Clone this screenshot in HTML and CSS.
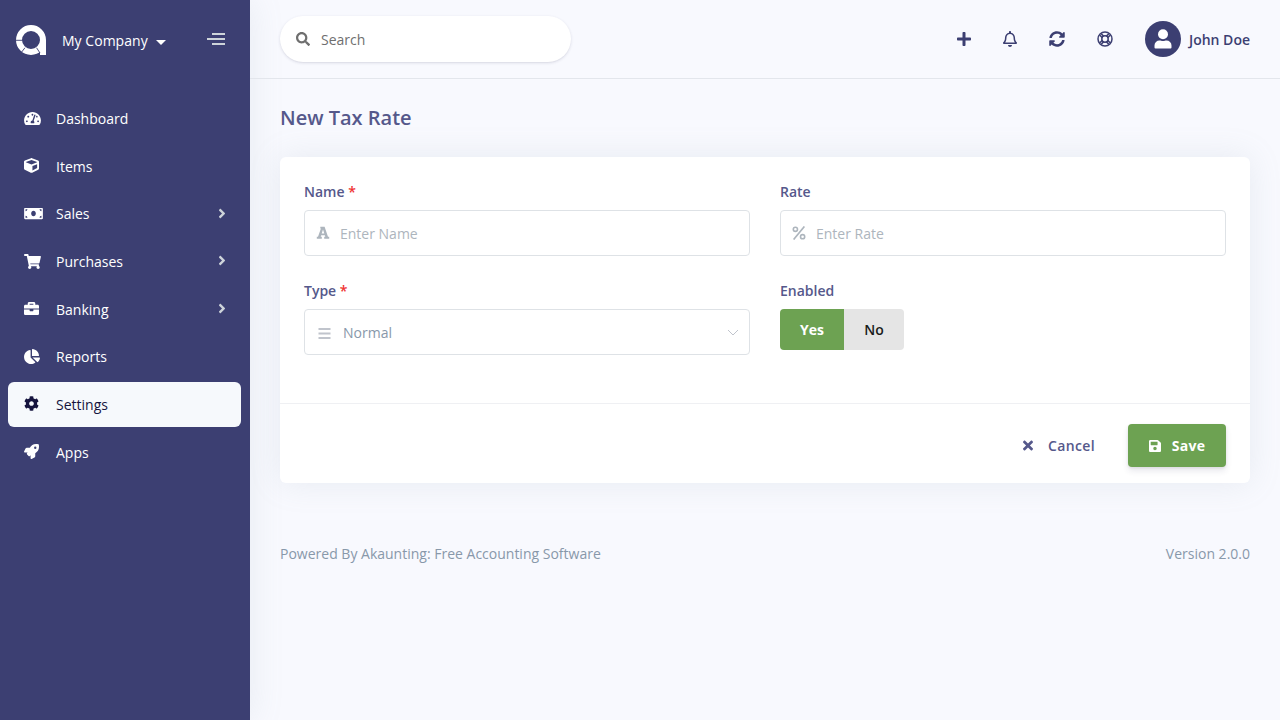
FILE: index.html
```html
<!DOCTYPE html>
<html lang="en">
<head>
<meta charset="utf-8">
<title>New Tax Rate</title>
<link rel="stylesheet" href="styles.css">
</head>
<body>
<aside class="sidebar">
  <div class="brand">
    <svg class="logo" viewBox="0 0 30 30"><circle cx="15" cy="15" r="12" fill="none" stroke="#fff" stroke-width="6"/><path d="M24 15h6v15h-6z" fill="#fff"/><path d="M0 15.3h6.500M9 22.700l-3.400 4.400M20.500 22.700l3.500 5.300" stroke="#3c3f72" stroke-width=".9"/></svg>
    <span class="company">My Company</span>
    <span class="caret"></span>
    <span class="burger"><i></i><i></i><i></i></span>
  </div>
  <nav class="menu">
    <a class="item"><svg class="w17" viewBox="0 0 576 512"><path d="M288 32C128.94 32 0 160.94 0 320c0 52.8 14.25 102.26 39.06 144.8 5.61 9.62 16.3 15.2 27.44 15.2h443c11.14 0 21.83-5.58 27.44-15.2C561.75 422.26 576 372.8 576 320c0-159.06-128.94-288-288-288zm0 64c14.71 0 26.58 10.13 30.32 23.65-1.11 2.26-2.64 4.23-3.45 6.67l-9.22 27.67c-5.13 3.49-10.97 6.01-17.64 6.01-17.67 0-32-14.33-32-32S270.33 96 288 96zM96 384c-17.67 0-32-14.33-32-32s14.33-32 32-32 32 14.33 32 32-14.33 32-32 32zm48-160c-17.67 0-32-14.33-32-32s14.33-32 32-32 32 14.33 32 32-14.33 32-32 32zm246.77-72.41l-61.33 184C343.13 347.33 352 364.54 352 384c0 11.72-3.38 22.55-8.88 32H232.88c-5.5-9.45-8.88-20.28-8.88-32 0-33.94 26.5-61.43 59.9-63.59l61.34-184.01c4.17-12.56 17.73-19.45 30.36-15.17 12.57 4.19 19.35 17.79 15.17 30.36zm14.66 57.2l15.52-46.55c3.47-1.29 7.13-2.23 11.05-2.23 17.67 0 32 14.33 32 32s-14.33 32-32 32c-11.38-.01-20.89-6.28-26.57-15.22zM480 384c-17.67 0-32-14.33-32-32s14.33-32 32-32 32 14.33 32 32-14.33 32-32 32z"/></svg><span>Dashboard</span></a>
    <a class="item"><svg viewBox="0 0 512 512"><path d="M239.1 6.3l-208 78c-18.7 7-31.1 25-31.1 45v225.1c0 18.2 10.3 34.8 26.5 42.9l208 104c13.5 6.8 29.4 6.8 42.9 0l208-104c16.3-8.1 26.5-24.8 26.5-42.9V129.3c0-20-12.4-37.9-31.1-44.9l-208-78C262 2.2 250 2.2 239.1 6.3zM256 68.4l192 72v1.1l-192 78-192-78v-1.1l192-72zm32 356V275.5l160-65v133.9l-160 80z"/></svg><span>Items</span></a>
    <a class="item"><svg class="w19" viewBox="0 0 640 512"><path d="M608 64H32C14.33 64 0 78.33 0 96v320c0 17.67 14.33 32 32 32h576c17.67 0 32-14.33 32-32V96c0-17.67-14.33-32-32-32zM48 400v-64c35.35 0 64 28.65 64 64H48zm0-224v-64h64c0 35.35-28.65 64-64 64zm272 176c-44.19 0-80-42.99-80-96 0-53.02 35.82-96 80-96s80 42.98 80 96c0 53.03-35.83 96-80 96zm272 48h-64c0-35.35 28.65-64 64-64v64zm0-224c-35.35 0-64-28.65-64-64h64v64z"/></svg><span>Sales</span><svg class="arrow" viewBox="0 0 256 512"><path d="M224.3 273l-136 136c-9.4 9.4-24.6 9.4-33.9 0l-22.6-22.6c-9.4-9.4-9.4-24.6 0-33.9l96.4-96.4-96.4-96.4c-9.4-9.4-9.4-24.6 0-33.9L54.3 103c9.4-9.4 24.6-9.4 33.9 0l136 136c9.5 9.4 9.5 24.6.1 34z"/></svg></a>
    <a class="item"><svg class="w17" viewBox="0 0 576 512"><path d="M528.12 301.319l47.273-208C578.806 78.301 567.391 64 551.99 64H159.208l-9.166-44.81C147.758 8.021 137.93 0 126.529 0H24C10.745 0 0 10.745 0 24v16c0 13.255 10.745 24 24 24h69.883l70.248 343.435C147.325 417.1 136 435.222 136 456c0 30.928 25.072 56 56 56s56-25.072 56-56c0-15.674-6.447-29.835-16.824-40h209.647C430.447 426.165 424 440.326 424 456c0 30.928 25.072 56 56 56s56-25.072 56-56c0-22.172-12.888-41.332-31.579-50.405l5.517-24.276c3.413-15.018-8.002-29.319-23.403-29.319H218.117l-6.545-32h293.145c11.206 0 20.92-7.754 23.403-18.681z"/></svg><span>Purchases</span><svg class="arrow" viewBox="0 0 256 512"><path d="M224.3 273l-136 136c-9.4 9.4-24.6 9.4-33.9 0l-22.6-22.6c-9.4-9.4-9.4-24.6 0-33.9l96.4-96.4-96.4-96.4c-9.4-9.4-9.4-24.6 0-33.9L54.3 103c9.4-9.4 24.6-9.4 33.9 0l136 136c9.5 9.4 9.5 24.6.1 34z"/></svg></a>
    <a class="item"><svg viewBox="0 0 512 512"><path d="M320 336c0 8.84-7.16 16-16 16h-96c-8.84 0-16-7.16-16-16v-48H0v144c0 25.6 22.4 48 48 48h416c25.6 0 48-22.4 48-48V288H320v48zm144-208h-80V80c0-25.6-22.4-48-48-48H176c-25.6 0-48 22.4-48 48v48H48c-25.6 0-48 22.4-48 48v80h512v-80c0-25.6-22.4-48-48-48zm-144 0H192V96h128v32z"/></svg><span>Banking</span><svg class="arrow" viewBox="0 0 256 512"><path d="M224.3 273l-136 136c-9.4 9.4-24.6 9.4-33.9 0l-22.6-22.6c-9.4-9.4-9.4-24.6 0-33.9l96.4-96.4-96.4-96.4c-9.4-9.4-9.4-24.6 0-33.9L54.3 103c9.4-9.4 24.6-9.4 33.9 0l136 136c9.5 9.4 9.5 24.6.1 34z"/></svg></a>
    <a class="item"><svg class="w16" viewBox="0 0 544 512"><path d="M527.79 288H290.5l158.03 158.03c6.04 6.04 15.98 6.53 22.19.68 38.7-36.46 65.32-85.61 73.13-140.86 1.34-9.46-6.51-17.85-16.06-17.85zm-15.83-64.8C503.72 103.74 408.26 8.28 288.8.04 279.68-.59 272 7.1 272 16.24V240h223.77c9.14 0 16.82-7.68 16.19-16.8zM224 288V50.71c0-9.55-8.39-17.4-17.84-16.06C86.99 51.49-4.1 155.6.14 280.37 4.5 408.51 114.83 513.59 243.03 511.98c50.4-.63 96.97-16.87 135.26-44.03 7.9-5.6 8.42-17.23 1.57-24.08L224 288z"/></svg><span>Reports</span></a>
    <a class="item active"><svg viewBox="0 0 512 512"><path d="M487.4 315.7l-42.6-24.6c4.3-23.2 4.3-47 0-70.2l42.6-24.6c4.9-2.8 7.1-8.6 5.5-14-11.1-35.6-30-67.8-54.7-94.6-3.8-4.1-10-5.1-14.8-2.3L380.8 110c-17.9-15.4-38.5-27.3-60.8-35.1V25.8c0-5.6-3.9-10.5-9.4-11.7-36.7-8.2-74.3-7.8-109.2 0-5.5 1.2-9.4 6.1-9.4 11.7V75c-22.2 7.9-42.8 19.8-60.8 35.1L88.7 85.5c-4.9-2.8-11-1.9-14.8 2.3-24.7 26.7-43.6 58.9-54.7 94.6-1.7 5.4.6 11.2 5.5 14L67.3 221c-4.3 23.2-4.3 47 0 70.2l-42.6 24.6c-4.9 2.8-7.1 8.6-5.5 14 11.1 35.6 30 67.8 54.7 94.6 3.8 4.1 10 5.1 14.8 2.3l42.6-24.6c17.9 15.4 38.5 27.3 60.8 35.1v49.2c0 5.6 3.9 10.5 9.4 11.7 36.7 8.2 74.3 7.8 109.2 0 5.5-1.2 9.4-6.1 9.4-11.7v-49.2c22.2-7.9 42.8-19.8 60.8-35.1l42.6 24.6c4.9 2.8 11 1.9 14.8-2.3 24.7-26.7 43.6-58.9 54.7-94.6 1.5-5.500-.7-11.300-5.600-14.100zM256 336c-44.100 0-80-35.900-80-80s35.900-80 80-80 80 35.900 80 80-35.900 80-80 80z"/></svg><span>Settings</span></a>
    <a class="item"><svg viewBox="0 0 512 512"><path d="M505.12 19.09c-1.19-5.53-6.66-11-12.21-12.19C460.72 0 435.51 0 410.41 0 307.18 0 245.27 55.2 199.05 128H94.84c-16.35 0-35.56 11.88-42.89 26.48L2.52 253.3A28.4 28.4 0 0 0 0 264a24 24 0 0 0 24 24h103.8l-22.47 22.47c-11.36 11.36-13 32.26 0 45.25l50.9 50.9c11.16 11.2 32.16 13.16 45.28 0L224 384.16V488a24 24 0 0 0 24 24 28.56 28.56 0 0 0 10.7-2.52l98.74-49.39c14.63-7.3 26.5-26.5 26.5-42.86V312.8c72.6-46.31 128.04-108.4 128.04-211.1.1-25.2.1-50.4-6.86-82.6zM384.04 168A40 40 0 1 1 424.05 128a40 40 0 0 1-40 40z"/></svg><span>Apps</span></a>
  </nav>
</aside>
<main class="main">
  <header class="topbar">
    <label class="search"><svg viewBox="0 0 512 512"><path d="M505 442.7L405.3 343c-4.5-4.5-10.6-7-17-7H372c27.6-35.3 44-79.7 44-128C416 93.1 322.9 0 208 0S0 93.1 0 208s93.1 208 208 208c48.3 0 92.7-16.4 128-44v16.3c0 6.4 2.5 12.5 7 17l99.7 99.7c9.4 9.4 24.6 9.4 33.9 0l28.3-28.3c9.4-9.4 9.4-24.6.1-34zM208 336c-70.7 0-128-57.2-128-128 0-70.7 57.2-128 128-128 70.7 0 128 57.2 128 128 0 70.7-57.2 128-128 128z"/></svg><span>Search</span></label>
    <div class="actions">
      <svg class="w14" viewBox="0 0 448 512"><path d="M416 208H272V64c0-17.67-14.33-32-32-32h-32c-17.67 0-32 14.33-32 32v144H32c-17.67 0-32 14.33-32 32v32c0 17.67 14.33 32 32 32h144v144c0 17.67 14.33 32 32 32h32c17.67 0 32-14.33 32-32V304h144c17.67 0 32-14.33 32-32v-32c0-17.67-14.33-32-32-32z"/></svg>
      <svg class="w14" viewBox="0 0 448 512"><path d="M439.39 362.29c-19.32-20.76-55.47-51.99-55.47-154.29 0-77.7-54.48-139.9-127.94-155.16V32c0-17.67-14.32-32-31.98-32s-31.98 14.33-31.98 32v20.84C118.56 68.1 64.08 130.3 64.08 208c0 102.3-36.15 133.53-55.47 154.29-6 6.45-8.66 14.16-8.61 21.71.11 16.4 12.98 32 32.1 32h383.8c19.12 0 32-15.6 32.1-32 .05-7.55-2.61-15.27-8.61-21.71zM67.53 368c21.22-27.97 44.42-74.33 44.53-159.42 0-.2-.06-.38-.06-.58 0-61.86 50.14-112 112-112s112 50.14 112 112c0 .2-.06.38-.06.58.11 85.1 23.31 131.46 44.53 159.42H67.53zM224 512c35.32 0 63.97-28.65 63.97-64H160.03c0 35.35 28.65 64 63.97 64z"/></svg>
      <svg viewBox="0 0 512 512"><path d="M370.72 133.28C339.458 104.008 298.888 87.962 255.848 88c-77.458.068-144.328 53.178-162.791 126.85-1.344 5.363-6.122 9.15-11.651 9.15H24.103c-7.498 0-13.194-6.807-11.807-14.176C33.933 94.924 134.813 8 256 8c66.448 0 126.791 26.136 171.315 68.685L463.03 40.97C478.149 25.851 504 36.559 504 57.941V192c0 13.255-10.745 24-24 24H345.941c-21.382 0-32.09-25.851-16.971-40.971l41.75-41.749zM32 296h134.059c21.382 0 32.09 25.851 16.971 40.971l-41.75 41.75c31.262 29.273 71.835 45.319 114.876 45.28 77.418-.07 144.315-53.144 162.787-126.849 1.344-5.363 6.122-9.15 11.651-9.15h57.304c7.498 0 13.194 6.807 11.807 14.176C478.067 417.076 377.187 504 256 504c-66.448 0-126.791-26.136-171.315-68.685L48.97 471.03C33.851 486.149 8 475.441 8 454.059V320c0-13.255 10.745-24 24-24z"/></svg>
      <svg class="ring" viewBox="0 0 16 16"><circle cx="8" cy="8" r="7"/><circle cx="8" cy="8" r="3.2"/><path d="M2.9 4.3l2.4 2.4M4.3 2.9l2.4 2.4M13.1 4.3l-2.4 2.4M11.7 2.9L9.3 5.3M2.9 11.7l2.4-2.4M4.3 13.1l2.4-2.4M13.1 11.7l-2.4-2.4M11.7 13.1l-2.4-2.4"/></svg>
    </div>
    <div class="user">
      <svg viewBox="0 0 36 36"><circle cx="18" cy="18" r="18" fill="#3c3f72"/><circle cx="18" cy="13.2" r="5" fill="#fff"/><path d="M9.5 26.5v-2a5 5 0 0 1 5-5c1.3 0 2 .6 3.5.6s2.200-.6 3.500-.6a5 5 0 0 1 5 5v2q0 1-1 1h-15q-1 0-1-1z" fill="#fff"/></svg>
      <span>John Doe</span>
    </div>
  </header>
  <h1 class="title">New Tax Rate</h1>
  <section class="card">
    <div class="form">
      <div class="field"><div class="label">Name <b>*</b></div>
        <div class="input"><svg class="letter" viewBox="0 0 14 14"><path fill-rule="evenodd" d="M4.300.8h4.300l3.400 10h1.200v1.900H8.200v-1.900h1.100L8.800 9.200H5.200l-.5 1.600h1.100v1.900H.8v-1.900H2L4.900 2.600h-.6zM5.700 7.400h2.600L7 3.400z"/></svg><span>Enter Name</span></div></div>
      <div class="field"><div class="label">Rate</div>
        <div class="input"><svg class="percent" viewBox="0 0 14 14"><circle cx="3.400" cy="3.300" r="2.100"/><circle cx="10.600" cy="10.700" r="2.100"/><path d="M12.400.4L1.600 13.600"/></svg><span>Enter Rate</span></div></div>
      <div class="field"><div class="label">Type <b>*</b></div>
        <div class="input select"><svg class="lines" viewBox="0 0 13 12"><path d="M.5 1h12M.5 5.500h12M.5 10h12"/></svg><span>Normal</span><svg class="chevron" viewBox="0 0 12 8"><path d="M1 1l5 5 5-5"/></svg></div></div>
      <div class="field"><div class="label">Enabled</div>
        <div class="toggle"><span class="yes">Yes</span><span class="no">No</span></div></div>
    </div>
    <div class="card-foot">
      <a class="cancel"><svg viewBox="0 0 352 512"><path d="M242.72 256l100.07-100.07c12.28-12.28 12.28-32.19 0-44.48l-22.24-22.24c-12.28-12.28-32.19-12.28-44.48 0L176 189.28 75.93 89.21c-12.28-12.28-32.19-12.28-44.48 0L9.21 111.45c-12.28 12.28-12.28 32.19 0 44.48L109.28 256 9.21 356.07c-12.28 12.28-12.28 32.19 0 44.48l22.24 22.24c12.28 12.28 32.2 12.28 44.48 0L176 322.72l100.07 100.07c12.28 12.28 32.2 12.28 44.48 0l22.24-22.24c12.28-12.28 12.28-32.19 0-44.48L242.72 256z"/></svg><span>Cancel</span></a>
      <a class="save"><svg viewBox="0 0 448 512"><path d="M433.941 129.941l-83.882-83.882A48 48 0 0 0 316.118 32H48C21.490 32 0 53.490 0 80v352c0 26.510 21.490 48 48 48h352c26.510 0 48-21.490 48-48V163.882a48 48 0 0 0-14.059-33.941zM224 416c-35.346 0-64-28.654-64-64 0-35.346 28.654-64 64-64s64 28.654 64 64c0 35.346-28.654 64-64 64zm96-304.520V212c0 6.627-5.373 12-12 12H76c-6.627 0-12-5.373-12-12V108c0-6.627 5.373-12 12-12h228.520c3.183 0 6.235 1.264 8.485 3.515l3.480 3.480A11.996 11.996 0 0 1 320 111.480z"/></svg><span>Save</span></a>
    </div>
  </section>
  <footer class="footer"><span>Powered By Akaunting: Free Accounting Software</span><span>Version 2.0.0</span></footer>
</main>
</body>
</html>
```
FILE: styles.css
```css
* { box-sizing: border-box; }
body { margin: 0; height: 720px; overflow: hidden; display: flex; background: #f8f9fe; font: 14px/21px "Open Sans", sans-serif; color: #8898aa; }
svg { display: block; flex: none; fill: currentColor; }
.sidebar { width: 250px; flex: none; background: #3c3f72; color: #fff; box-shadow: 0 0 32px rgba(136,152,170,.15); }
.brand { height: 95px; padding: 25px 25px 0 16px; display: flex; align-items: flex-start; }
.logo { width: 30px; height: 30px; }
.company { margin: 5px 0 0 16px; letter-spacing: .03px; }
.caret { margin: 15px 0 0 8px; border: 5px solid transparent; border-top-color: #fff; border-bottom: 0; }
.burger { margin: 8px 0 0 auto; width: 18px; display: flex; flex-direction: column; align-items: flex-end; gap: 3px; }
.burger i { width: 13px; height: 2px; background: #ced4da; }
.burger i:nth-child(2) { width: 18px; }
.menu { display: flex; flex-direction: column; gap: 2.66px; padding: 1px 9px 0 8px; }
.item { height: 45px; padding: 0 15px 0 16px; border-radius: 6px; display: flex; align-items: center; }
.item > svg { width: 15px; height: 15px; margin: -1px 17px 0 0; }
.item span { width: 150px; margin-right: auto; }
.item > .w17 { width: 17px; margin: 0 15px 0 0; }
.item > .w19 { width: 19px; margin-right: 13px; }
.item > .w16 { width: 16px; margin-right: 16px; }
.item > .arrow { width: 8px; margin-right: 0; color: #ced4da; }
.active { background: #f6f9fc; color: #15143e; }
.main { flex: 1; min-width: 0; }
.topbar { height: 79px; border-bottom: 1px solid #e3e6ec; padding: 0 30px; display: flex; align-items: center; }
.search { width: 291px; height: 46px; border-radius: 23px; background: #fff; box-shadow: 0 1px 3px rgba(50,50,93,.15), 0 1px 0 rgba(0,0,0,.02); display: flex; align-items: center; padding-left: 16px; gap: 11px; color: #6f6f6f; }
.search svg { width: 14px; height: 14px; }
.actions { margin-left: auto; display: flex; align-items: center; gap: 32px; color: #3c3f72; }
.actions svg { width: 16px; height: 16px; }
.actions .w14 { width: 14px; }
.actions .ring { fill: none; stroke: #3c3f72; stroke-width: 1.5; }
.user { margin-left: 32px; display: flex; align-items: center; gap: 8px; font-weight: 600; color: #3c3f72; }
.user svg { width: 36px; height: 36px; }
.title { margin: 24px 30px; font-size: 20px; line-height: 30px; font-weight: 600; color: #55588b; }
.card { margin: 0 30px; height: 326px; border-radius: 6px; background: #fff; box-shadow: 0 0 32px rgba(136,152,170,.15); }
.form { height: 246px; padding: 24px 24px 0; display: grid; grid-template-columns: 1fr 1fr; grid-template-rows: 99px 99px; column-gap: 30px; }
.label { height: 29px; font-weight: 600; color: #55588b; }
.label b { color: #ef3232; font-weight: 600; }
.input { height: 46px; border: 1px solid #dee2e6; border-radius: 4px; display: flex; align-items: center; padding: 0 12px 0 11px; gap: 10px; color: #adb5bd; }
.input span { padding-top: 1px; }
.letter, .percent { width: 14px; height: 14px; }
.percent { fill: none; stroke: #adb5bd; stroke-width: 1.6; }
.select { color: #8898aa; padding-left: 13px; gap: 12px; }
.lines { width: 13px; height: 12px; margin-top: 3px; fill: none; stroke: #c0c4cc; stroke-width: 1.8; }
.chevron { width: 12px; height: 8px; margin: 2px -2px 0 auto; fill: none; stroke: #c0c4cc; }
.toggle { display: inline-flex; height: 41px; border-radius: 4px; overflow: hidden; font-weight: 600; line-height: 41px; text-align: center; }
.yes { width: 64px; background: #6da252; color: #fff; font-weight: 700; }
.no { width: 60px; background: #e5e5e5; color: #1a1a1a; }
.card-foot { height: 80px; border-top: 1px solid #eff0f3; padding: 20px 24px; display: flex; justify-content: flex-end; font-weight: 600; letter-spacing: .35px; }
.cancel, .save { height: 43px; display: flex; align-items: center; }
.cancel { gap: 15px; margin-right: 33px; color: #55588b; }
.cancel svg { width: 10px; height: 15px; }
.save { width: 98px; justify-content: center; gap: 11px; background: #6da252; color: #fff; font-weight: 700; letter-spacing: .25px; border-radius: 4px; box-shadow: 0 4px 6px rgba(50,50,93,.11), 0 1px 3px rgba(0,0,0,.08); }
.save svg { width: 12px; height: 14px; }
.footer { margin: 60px 30px 0; display: flex; justify-content: space-between; }
```
